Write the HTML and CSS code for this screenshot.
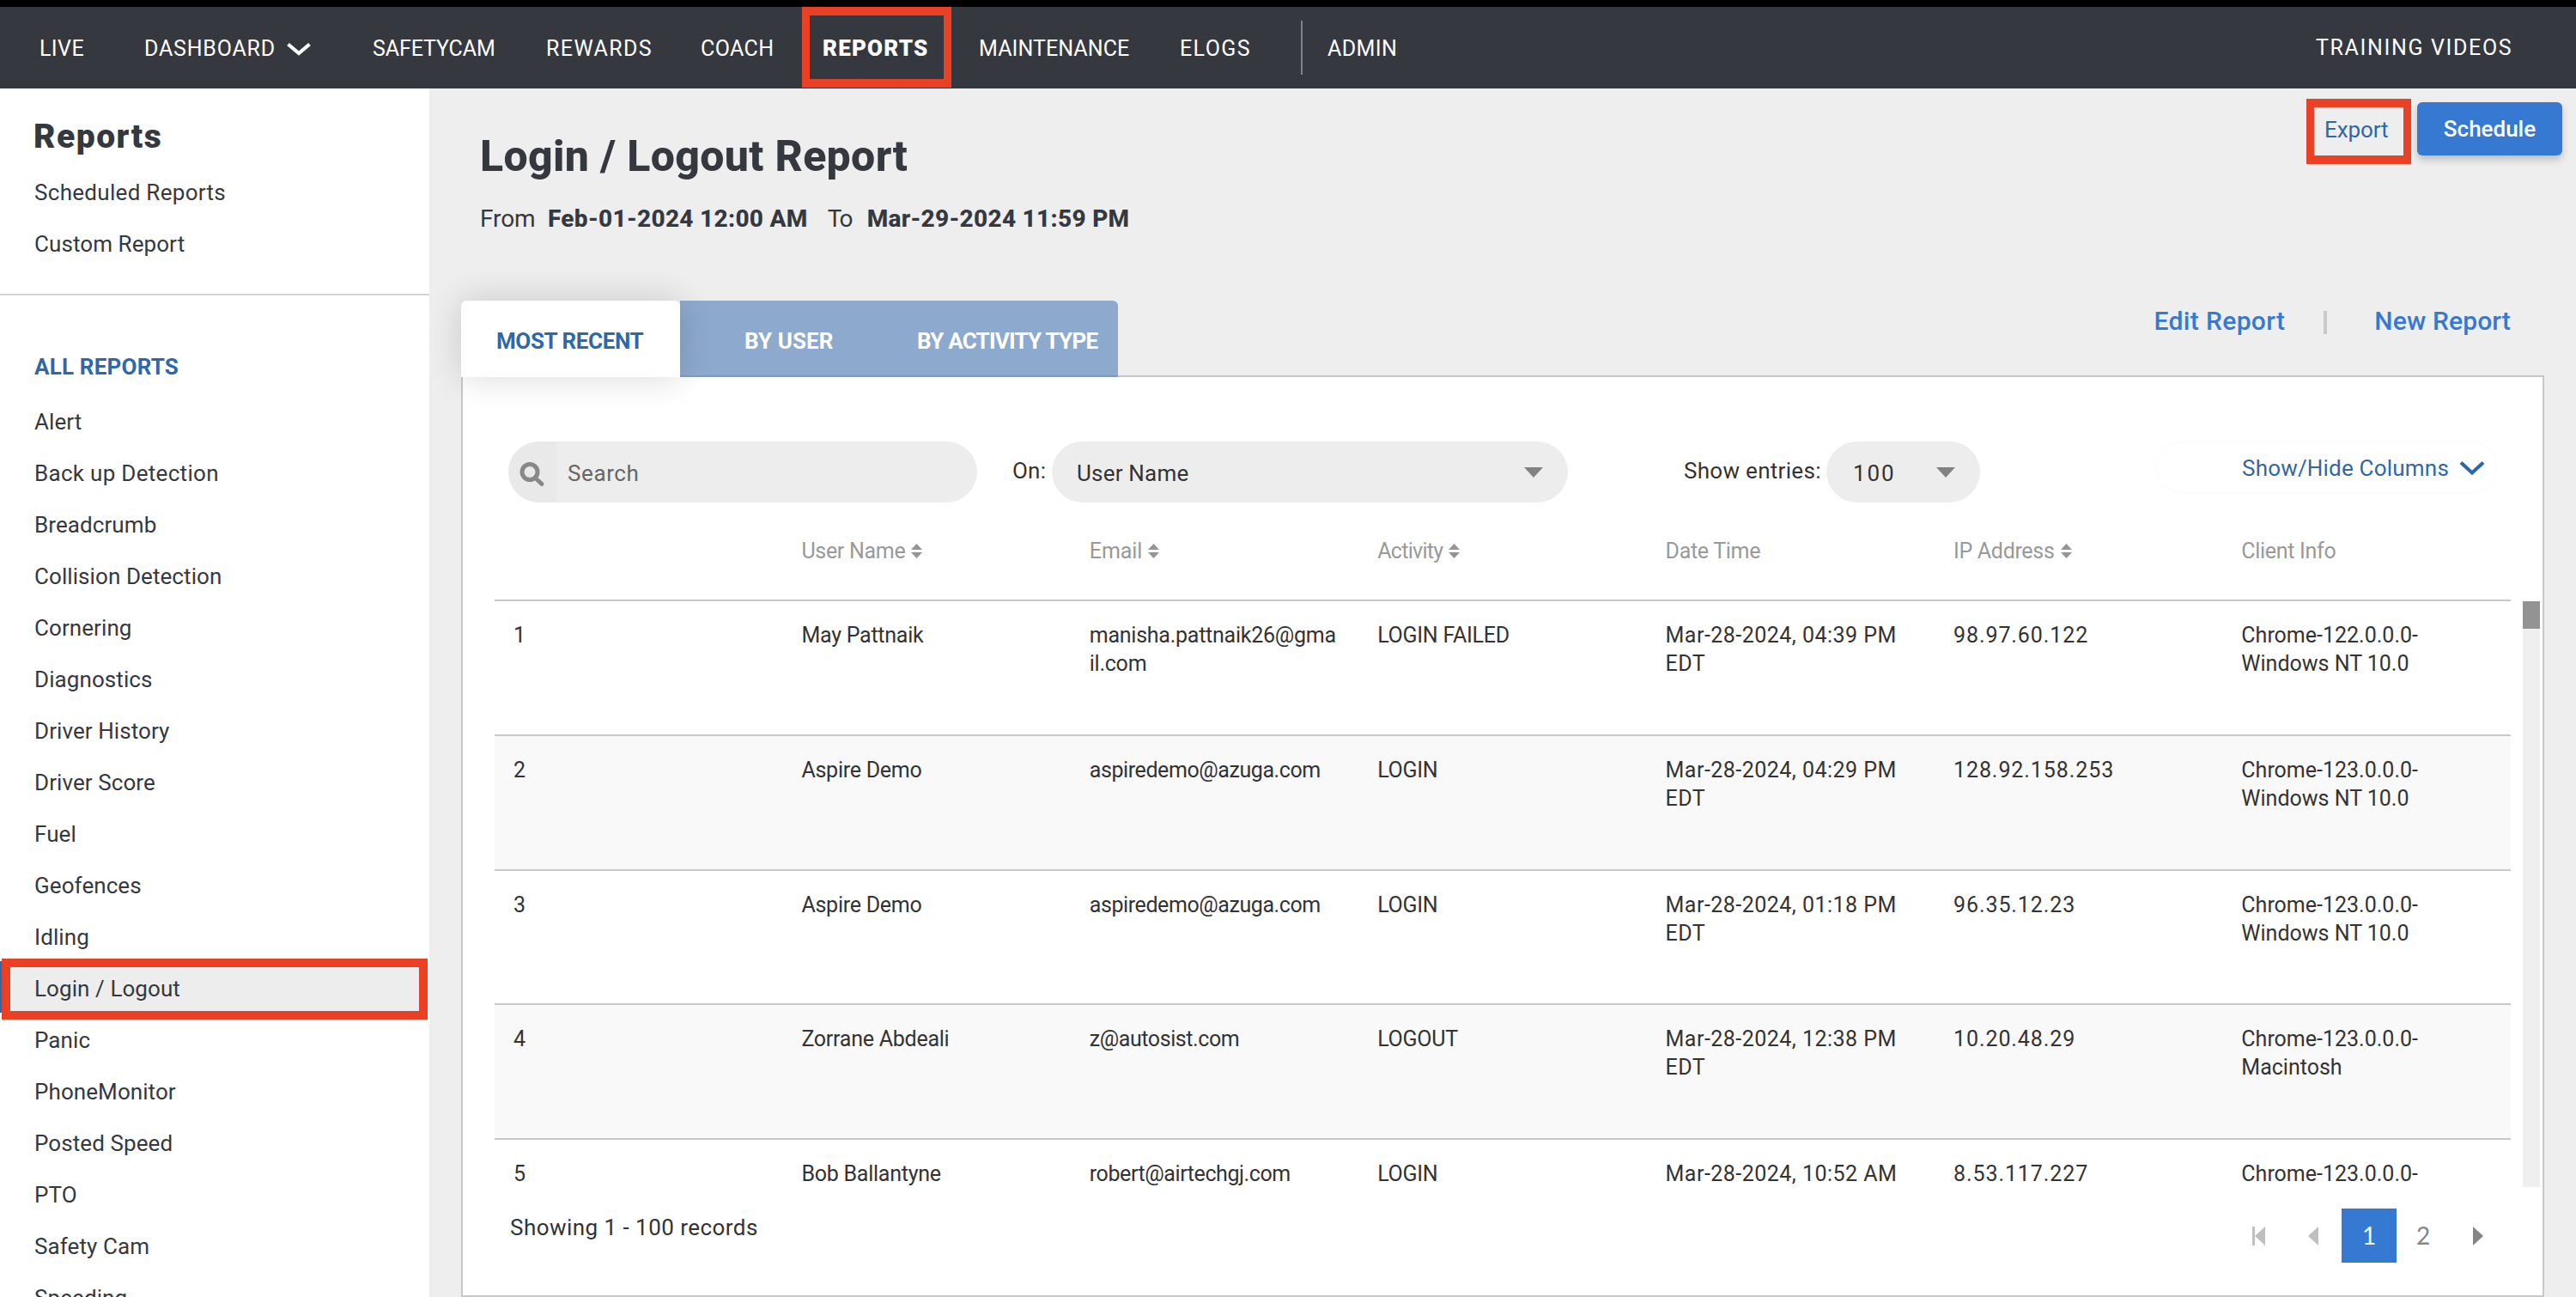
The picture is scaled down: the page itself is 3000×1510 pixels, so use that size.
FILE: index.html
```html
<!DOCTYPE html>
<html lang="en">
<head>
<meta charset="utf-8">
<title>Login / Logout Report</title>
<link rel="stylesheet" href="styles.css">
</head>
<body>
<nav class="topnav">
  <a>LIVE</a>
  <a class="wide">DASHBOARD <svg class="chev" width="30" height="16" viewBox="0 0 30 16"><path d="M2.5 2.5 15 13 27.500 2.500" fill="none" stroke="currentColor" stroke-width="4.200"/></svg></a>
  <a class="tight">SAFETYCAM</a>
  <a class="wider">REWARDS</a>
  <a>COACH</a>
  <a class="current">REPORTS</a>
  <a class="flat">MAINTENANCE</a>
  <a class="wider">ELOGS</a>
  <a class="admin">ADMIN</a>
  <a class="training">TRAINING VIDEOS</a>
</nav>
<div class="page">
  <aside class="sidebar">
    <h2>Reports</h2>
    <ul class="quick">
      <li class="loose">Scheduled Reports</li>
      <li>Custom Report</li>
    </ul>
    <h3>ALL REPORTS</h3>
    <ul class="reports">
      <li>Alert</li>
      <li class="loose">Back up Detection</li>
      <li>Breadcrumb</li>
      <li>Collision Detection</li>
      <li>Cornering</li>
      <li>Diagnostics</li>
      <li>Driver History</li>
      <li>Driver Score</li>
      <li>Fuel</li>
      <li>Geofences</li>
      <li>Idling</li>
      <li class="selected">Login / Logout</li>
      <li>Panic</li>
      <li>PhoneMonitor</li>
      <li>Posted Speed</li>
      <li>PTO</li>
      <li>Safety Cam</li>
      <li>Speeding</li>
    </ul>
  </aside>
  <main class="content">
    <header class="head">
      <div class="titles">
        <h1>Login / Logout Report</h1>
        <p><span class="from">From</span><b>Feb-01-2024 12:00 AM</b><span class="to">To</span><b>Mar-29-2024 11:59 PM</b></p>
      </div>
      <div class="actions">
        <a class="export">Export</a>
        <a class="schedule">Schedule</a>
      </div>
    </header>
    <div class="tabrow">
      <div class="tabs">
        <a class="tab active">MOST RECENT</a>
        <a class="tab user">BY USER</a>
        <a class="tab type">BY ACTIVITY TYPE</a>
      </div>
      <div class="links"><a>Edit Report</a><i></i><a class="new">New Report</a></div>
    </div>
    <section class="panel">
      <div class="filters">
        <div class="search"><span class="glass"><svg width="30" height="30" viewBox="0 0 30 30"><circle cx="12" cy="11.500" r="9" fill="none" stroke="#888" stroke-width="5"/><path d="m18.500 18.500 7.500 7" stroke="#888" stroke-width="5" stroke-linecap="round"/></svg></span>Search</div>
        <label class="on">On:</label>
        <div class="select field">User Name<svg width="22" height="12" viewBox="0 0 22 12"><path d="M0 0h22L11 12z" fill="#828282"/></svg></div>
        <label class="entries">Show entries:</label>
        <div class="select count"><span>100</span><svg width="22" height="12" viewBox="0 0 22 12"><path d="M0 0h22L11 12z" fill="#828282"/></svg></div>
        <div class="columns">Show/Hide Columns<svg width="30" height="18" viewBox="0 0 30 18"><path d="M2 2.500 15 14.500 28 2.500" fill="none" stroke="currentColor" stroke-width="4.200"/></svg></div>
      </div>
      <div class="row thead">
        <span></span>
        <span>User Name<svg class="sort" viewBox="0 0 13 17"><path d="M0 7h13L6.500 0zM0 10h13l-6.500 7z"/></svg></span>
        <span class="email">Email<svg class="sort" viewBox="0 0 13 17"><path d="M0 7h13L6.500 0zM0 10h13l-6.500 7z"/></svg></span>
        <span class="activity">Activity<svg class="sort" viewBox="0 0 13 17"><path d="M0 7h13L6.500 0zM0 10h13l-6.500 7z"/></svg></span>
        <span>Date Time</span>
        <span>IP Address<svg class="sort" viewBox="0 0 13 17"><path d="M0 7h13L6.500 0zM0 10h13l-6.500 7z"/></svg></span>
        <span>Client Info</span>
      </div>
      <div class="scroller">
        <div class="rows">
          <div class="row"><span>1</span><span>May Pattnaik</span><span>manisha.pattnaik26@gma<br>il.com</span><span>LOGIN FAILED</span><span class="date">Mar-28-2024, 04:39 PM<br>EDT</span><span class="ip">98.97.60.122</span><span class="client">Chrome-122.0.0.0-<br>Windows NT 10.0</span></div>
          <div class="row"><span>2</span><span>Aspire Demo</span><span class="mail">aspiredemo@azuga.com</span><span>LOGIN</span><span class="date">Mar-28-2024, 04:29 PM<br>EDT</span><span class="ip">128.92.158.253</span><span class="client">Chrome-123.0.0.0-<br>Windows NT 10.0</span></div>
          <div class="row"><span>3</span><span>Aspire Demo</span><span class="mail">aspiredemo@azuga.com</span><span>LOGIN</span><span class="date">Mar-28-2024, 01:18 PM<br>EDT</span><span class="ip">96.35.12.23</span><span class="client">Chrome-123.0.0.0-<br>Windows NT 10.0</span></div>
          <div class="row"><span>4</span><span>Zorrane Abdeali</span><span class="mail">z@autosist.com</span><span>LOGOUT</span><span class="date">Mar-28-2024, 12:38 PM<br>EDT</span><span class="ip">10.20.48.29</span><span class="client">Chrome-123.0.0.0-<br>Macintosh</span></div>
          <div class="row"><span>5</span><span>Bob Ballantyne</span><span class="mail">robert@airtechgj.com</span><span>LOGIN</span><span class="date">Mar-28-2024, 10:52 AM</span><span class="ip">8.53.117.227</span><span class="client">Chrome-123.0.0.0-</span></div>
        </div>
        <div class="track"><div class="thumb"></div></div>
      </div>
      <footer class="foot">
        <span class="showing">Showing 1 - 100 records</span>
        <div class="pager">
          <span><svg width="15" height="22" viewBox="0 0 15 22"><path d="M0 0h3v22H0zM15 0v22L3 11z" fill="#bfbfbf"/></svg></span>
          <span><svg width="12" height="22" viewBox="0 0 12 22"><path d="M12 0v22L0 11z" fill="#bfbfbf"/></svg></span>
          <span class="now">1</span>
          <span class="next">2</span>
          <span><svg width="12" height="22" viewBox="0 0 12 22"><path d="M0 0v22l12-11z" fill="#858585"/></svg></span>
        </div>
      </footer>
    </section>
  </main>
</div>
</body>
</html>
```
FILE: styles.css
```css
*, *::after { box-sizing: border-box; }
body {
  margin: 0;
  width: 3000px;
  height: 1510px;
  overflow: hidden;
  background: #eee;
  color: #333;
  font-family: Roboto, "Liberation Sans", sans-serif;
}
h1, h2, h3, p, ul { margin: 0; padding: 0; }
ul { list-style: none; }

.topnav {
  display: grid;
  grid-template-columns: 122px 266px 202px 180px 118px 206px 234px 141px 1182px 1fr;
  height: 103px;
  padding-left: 46px;
  border-top: 8px solid #000;
  background: #363840;
  color: #fff;
  font-size: 25px;
  line-height: 97px;
  letter-spacing: .4px;
  white-space: nowrap;
}
.topnav .wide { letter-spacing: .8px; }
.topnav .tight { letter-spacing: -.1px; }
.topnav .flat { letter-spacing: .08px; }
.topnav .wider { letter-spacing: 1.4px; }
.topnav .current {
  width: 174px;
  height: 94px;
  padding-left: 15px;
  border: 10px solid #ea4025;
  border-width: 10px 9px;
  font-size: 26px;
  font-weight: 900;
  letter-spacing: 1.2px;
  line-height: 77px;
}
.chev { margin-left: 5px; }
.topnav .admin {
  height: 63px;
  margin-top: 16px;
  padding-left: 29px;
  border-left: 2px solid #80828a;
  line-height: 65px;
}
.topnav .training { letter-spacing: 1.65px; line-height: 95px; }

.page { display: flex; height: 1407px; }
.sidebar {
  flex: none;
  width: 500px;
  padding-top: 22px;
  overflow: hidden;
  background: #fff;
  color: #363840;
  font-size: 26px;
  letter-spacing: .08px;
}
.sidebar h2 {
  padding-left: 39px;
  font-size: 39px;
  font-weight: 900;
  letter-spacing: 1.5px;
  line-height: 69px;
}
.sidebar li { height: 60px; padding-left: 40px; line-height: 60px; }
.sidebar .loose { letter-spacing: .3px; }
.quick { height: 150px; border-bottom: 2px solid #d4d4d4; }
.sidebar h3 {
  height: 69px;
  margin: 48px 0 -2px;
  padding-left: 40px;
  color: #2f67a9;
  font-size: 26px;
  font-weight: 700;
  letter-spacing: .2px;
  line-height: 70px;
}
.sidebar .reports li { line-height: 65px; }
.sidebar .reports .selected {
  position: relative;
  border-left: 4px solid #2f67a9;
  padding-left: 36px;
  background: #ededed;
}
.selected::after {
  content: "";
  position: absolute;
  left: -2px;
  top: -3px;
  width: 496px;
  height: 71px;
  border: 10px solid #ea4025;
}

.content { flex: 1; padding-left: 38px; }
.head { display: flex; justify-content: space-between; height: 247px; color: #363840; }
.titles { padding: 49px 0 0 21px; }
.titles h1 { font-size: 50px; font-weight: 800; letter-spacing: .35px; line-height: 61px; }
.titles p {
  display: flex;
  padding-top: 22px;
  font-size: 28px;
  line-height: 40px;
}
.titles b { font-weight: 800; letter-spacing: .3px; }
.titles .from { width: 79px; letter-spacing: -.1px; }
.titles .to { width: 46px; margin-left: 23px; letter-spacing: -1.5px; }
.actions {
  display: flex;
  align-items: flex-start;
  gap: 7px;
  padding: 12px 16px 0 0;
  font-size: 26px;
}
.export {
  width: 122px;
  height: 76px;
  padding-left: 12px;
  border: 10px solid #ea4025;
  border-width: 10px 9px;
  color: #2f67a9;
  letter-spacing: -.1px;
  line-height: 52px;
}
.schedule {
  width: 169px;
  height: 62px;
  margin-top: 4px;
  border-radius: 6px;
  background: #3579d3;
  box-shadow: 0 5px 9px rgba(0, 0, 0, .2);
  color: #fff;
  font-weight: 500;
  line-height: 62px;
  text-align: center;
}

.tabrow { display: flex; justify-content: space-between; height: 87px; }
.tabs {
  position: relative;
  display: flex;
  flex: none;
  height: 89px;
  margin-left: -1px;
  color: #fff;
  font-size: 26px;
  font-weight: 700;
  line-height: 94px;
  white-space: nowrap;
}
.tab { height: 89px; border-bottom: 2px solid #7f9bbc; background: #8da9cd; }
.tab.active {
  position: relative;
  width: 255px;
  padding-left: 41px;
  border: 0;
  border-radius: 6px 6px 0 0;
  background: #fff;
  box-shadow: 0 0 42px rgba(0, 0, 0, .16);
  color: #2f67a9;
  letter-spacing: -.4px;
}
.tab.user { width: 255px; padding-left: 75px; letter-spacing: .1px; }
.tab.type { width: 255px; padding-left: 21px; border-radius: 0 6px 0 0; letter-spacing: -.75px; }
.links {
  display: flex;
  height: 47px;
  padding-right: 76px;
  color: #3579d3;
  font-size: 30px;
  font-weight: 500;
  letter-spacing: .35px;
  line-height: 47px;
}
.links i { width: 4px; height: 27px; margin: 12px 55px 0 45px; background: #c9c9c9; }
.links .new { letter-spacing: .15px; }

.panel {
  width: 2426px;
  height: 1073px;
  margin-left: -1px;
  padding: 75px 3px 0 37px;
  border: 2px solid #c8c8c8;
  background: #fff;
}
.filters { display: flex; padding-left: 16px; font-size: 26px; color: #333; letter-spacing: .2px; white-space: nowrap; }
.search, .select { display: flex; height: 71px; border-radius: 36px; background: #ededed; line-height: 74px; }
.search { width: 546px; overflow: hidden; color: #666; letter-spacing: .6px; }
.glass { width: 56px; margin-right: 13px; padding: 24px 0 0 13px; background: #e9e9e9; line-height: 0; }
.filters label { line-height: 68px; }
.on { width: 46px; margin-left: 41px; }
.select { justify-content: space-between; padding: 0 29px; }
.select svg { margin-top: 30px; }
.field { width: 601px; }
.entries { width: 166px; margin-left: 135px; letter-spacing: .3px; }
.count { width: 179px; padding: 0 29px 0 31px; letter-spacing: 1.9px; }
.columns {
  width: 397px;
  height: 60px;
  margin-left: 205px;
  padding-left: 99px;
  border: 1px solid #fbfbfb;
  border-radius: 30px;
  color: #2f67a9;
  line-height: 60px;
}
.columns svg { margin-left: 12px; }

.row {
  display: grid;
  grid-template-columns: repeat(7, 335.4px);
  width: 2348px;
  height: 156.8px;
  padding-top: 23px;
  border-bottom: 2px solid #c8c8c8;
  font-size: 25px;
  line-height: 33px;
  letter-spacing: -.25px;
  white-space: nowrap;
}
.row span { padding-left: 22px; }
.row:nth-child(even) { background: #f9f9f9; }
.row.thead { height: 115px; padding-top: 40px; background: none; color: #999; letter-spacing: -.3px; }
.row .mail { letter-spacing: -.42px; }
.row .date { letter-spacing: .48px; }
.row .ip { letter-spacing: .92px; }
.row .client { letter-spacing: 0; }
.row .email { letter-spacing: -.1px; }
.row .activity { letter-spacing: -.7px; }
.sort { width: 13px; height: 17px; margin-left: 7px; fill: #959595; }

.scroller { display: flex; justify-content: space-between; height: 682px; overflow: hidden; }
.track { width: 20px; background: #efefef; }
.thumb { height: 32px; background: #939393; }

.foot { display: flex; justify-content: space-between; }
.showing { padding-left: 18px; font-size: 26px; letter-spacing: .46px; line-height: 94px; }
.pager {
  display: grid;
  grid-template-columns: repeat(5, 64px);
  height: 63px;
  margin: 25px 39px 0 0;
  color: #858585;
  font: 28px/63px Lato, sans-serif;
  text-align: center;
}
.pager span { padding-right: 2px; }
.pager svg { vertical-align: middle; margin-top: -5px; }
.pager .now { padding: 0; background: #3579d3; color: #fff; }
```
